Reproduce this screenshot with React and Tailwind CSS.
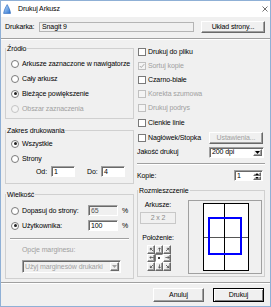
import React from 'react';

const SEP = 'h-[2px] border-t border-b border-t-[#a0a0a0] border-b-white';
const RAISED =
  'border border-t-white border-l-white border-b-[#696969] border-r-[#696969] shadow-[inset_-1px_-1px_0_#a0a0a0] bg-[#f0f0f0]';
const SUNKEN =
  'border border-t-[#a0a0a0] border-l-[#a0a0a0] border-b-white border-r-white shadow-[inset_1px_1px_0_#696969]';

function Btn({ children, className = '', disabled, def }) {
  const frame = def
    ? 'border border-black bg-[#f0f0f0] shadow-[inset_1px_1px_0_white,inset_-1px_-1px_0_#808080]'
    : RAISED;
  return (
    <div
      className={`flex shrink-0 items-center justify-center ${frame} ${disabled ? 'text-[#a0a0a0]' : 'text-black'} ${className}`}
    >
      {children}
    </div>
  );
}

function Field({ children, className = '', disabled }) {
  return (
    <div
      className={`flex shrink-0 items-center pl-[2px] ${SUNKEN} ${disabled ? 'bg-[#f0f0f0] text-[#555]' : 'bg-white'} ${className}`}
    >
      {children}
    </div>
  );
}

function Arrow({ fill }) {
  return (
    <svg viewBox="0 0 5 3" className="h-[3px] w-[5px]">
      <path d="M0 0 H5 L2.5 3 Z" fill={fill} />
    </svg>
  );
}

function Combo({ value, className = '', disabled }) {
  return (
    <div
      className={`flex shrink-0 ${SUNKEN} ${disabled ? 'bg-[#f0f0f0] text-[#a0a0a0]' : 'bg-white'} ${className}`}
    >
      <span className="flex flex-1 items-center pl-[2px]">{value}</span>
      <span className={`my-[1px] mr-[1px] flex w-[9px] items-center justify-center ${RAISED}`}>
        <Arrow fill={disabled ? '#a0a0a0' : '#000'} />
      </span>
    </div>
  );
}

function Spin({ className = '' }) {
  return (
    <div className={`flex shrink-0 bg-white ${SUNKEN} ${className}`}>
      <span className="flex flex-1 items-center pl-[2px]">1</span>
      <span className="my-[1px] mr-[1px] flex w-[8px] flex-col">
        <span className={`flex flex-1 items-center justify-center ${RAISED}`}>
          <svg viewBox="0 0 5 3" className="h-[2px] w-[4px]">
            <path d="M0 3 H5 L2.5 0 Z" fill="#000" />
          </svg>
        </span>
        <span className={`flex flex-1 items-center justify-center ${RAISED}`}>
          <svg viewBox="0 0 5 3" className="h-[2px] w-[4px]">
            <path d="M0 0 H5 L2.5 3 Z" fill="#000" />
          </svg>
        </span>
      </span>
    </div>
  );
}

function Radio({ label, checked, disabled, labelClass = '', children }) {
  return (
    <div className="flex h-[15px] items-center pl-[5px]">
      <span
        className={`flex h-[8px] w-[8px] shrink-0 items-center justify-center rounded-full border ${disabled ? 'border-[#c4c4c4] bg-[#f4f4f4]' : 'border-[#7a7a7a] bg-white'}`}
      >
        {checked && <span className="h-[3px] w-[3px] rounded-full bg-[#222]" />}
      </span>
      <span className={`ml-[3px] whitespace-nowrap ${disabled ? 'text-[#a0a0a0]' : ''} ${labelClass}`}>
        {label}
      </span>
      {children}
    </div>
  );
}

function Check({ label, checked, disabled, className = 'h-[14px]', children }) {
  return (
    <div className={`flex items-center pl-[1px] ${className}`}>
      <span
        className={`flex h-[8px] w-[8px] shrink-0 items-center justify-center border ${disabled ? 'border-[#c0c0c0] bg-[#f4f4f4]' : 'border-[#7a7a7a] bg-white'}`}
      >
        {checked && (
          <svg viewBox="0 0 8 8" className="h-[6px] w-[6px]">
            <path
              d="M1 4 L3 6 L7 1.5"
              fill="none"
              stroke={disabled ? '#a0a0a0' : '#222'}
              strokeWidth="1.2"
            />
          </svg>
        )}
      </span>
      <span className={`ml-[2px] whitespace-nowrap ${disabled ? 'text-[#a0a0a0]' : ''}`}>{label}</span>
      {children}
    </div>
  );
}

function Group({ title, className = '', children }) {
  return (
    <fieldset className={`border border-[#d0d0d0] ${className}`}>
      <legend className="px-[1px] leading-[9px]">{title}</legend>
      {children}
    </fieldset>
  );
}

const cells = [315, 0, 45, 270, null, 90, 225, 180, 135];

function PosGrid() {
  return (
    <div className="mt-[3px] ml-[2px] grid h-[26px] w-[24px] grid-cols-3 grid-rows-3">
      {cells.map((a, i) =>
        a === null ? (
          <span
            key={i}
            className="flex items-center justify-center border border-t-[#808080] border-l-[#808080] border-b-white border-r-white bg-white"
          >
            <span className="h-[2px] w-[2px] rounded-full bg-black" />
          </span>
        ) : (
          <span key={i} className={`flex items-center justify-center ${RAISED}`}>
            <svg viewBox="0 0 6 6" className="h-[5px] w-[5px]">
              <path
                d="M3 5.5 V1 M1.3 2.7 L3 1 L4.7 2.7"
                fill="none"
                stroke="#333"
                strokeWidth="0.8"
                transform={`rotate(${a} 3 3)`}
              />
            </svg>
          </span>
        )
      )}
    </div>
  );
}

function TitleIcon() {
  return (
    <svg viewBox="0 0 8 10" className="h-[10px] w-[8px] shrink-0">
      <defs>
        <linearGradient id="ti" x1="0" y1="0" x2="1" y2="1">
          <stop offset="0" stopColor="#bfe0ff" />
          <stop offset="1" stopColor="#2f74d0" />
        </linearGradient>
      </defs>
      <path d="M4.2 0.6 C5.5 3 7.2 6 7.5 9.4 L0.6 9.4 C1.2 6 2.6 3 4.2 0.6 Z" fill="url(#ti)" stroke="#1f5fb8" strokeWidth="0.6" />
    </svg>
  );
}

export default function App() {
  return (
    <div className="flex h-[307px] w-[271px] flex-col overflow-hidden border border-[#8fb0d6] bg-[#f0f0f0] font-['Liberation_Sans',Arial,sans-serif] text-[7px] leading-[8px] tracking-[-0.1px] text-black">
      {/* title bar */}
      <div className="flex h-[16px] shrink-0 items-center bg-white pl-[2px] pr-[2px]">
        <TitleIcon />
        <span className="ml-[7px]">Drukuj Arkusz</span>
        <svg viewBox="0 0 6 6" className="ml-auto h-[6px] w-[6px]">
          <path d="M0.5 0.5 L5.5 5.5 M5.5 0.5 L0.5 5.5" stroke="#333" strokeWidth="0.7" />
        </svg>
      </div>

      {/* printer row */}
      <div className="mt-[4px] flex h-[12px] shrink-0 items-center pl-[4px]">
        <span className="w-[34px]">Drukarka:</span>
        <div className="flex h-[10px] w-[155px] items-center border border-[#b4b4b4] bg-[#f0f0f0] pl-[2px]">
          Snagit 9
        </div>
        <Btn className="ml-[7px] h-[12px] w-[64px]">Układ strony...</Btn>
      </div>
      <div className={`mt-[5px] shrink-0 ${SEP}`} />

      {/* main */}
      <div className="flex h-[242px] shrink-0 pl-[4px]">
        {/* left column */}
        <div className="flex w-[129px] flex-col pt-[4px]">
          <Group title="Źródło" className="pb-[2px]">
            <div className="mt-[3px]">
              <Radio label="Arkusze zaznaczone w nawigatorze" />
              <Radio label="Cały arkusz" />
              <Radio label="Bieżące powiększenie" checked />
              <Radio label="Obszar zaznaczenia" disabled />
            </div>
          </Group>

          <Group title="Zakres drukowania" className="mt-[7px] pb-[6px]">
            <div className="mt-[1px]">
              <Radio label="Wszystkie" checked />
              <Radio label="Strony" />
              <div className="flex h-[11px] items-center pl-[30px]">
                <span className="w-[15px]">Od:</span>
                <Field className="h-[11px] w-[24px]">1</Field>
                <span className="ml-[12px] w-[14px]">Do:</span>
                <Field className="h-[11px] w-[24px]">4</Field>
              </div>
            </div>
          </Group>

          <Group title="Wielkość" className="mt-[6px] pb-[5px]">
            <div className="mt-[4px]">
              <Radio label="Dopasuj do strony:" labelClass="w-[66px]">
                <Field disabled className="h-[11px] w-[30px]">
                  65
                </Field>
                <span className="ml-[4px]">%</span>
              </Radio>
              <Radio label="Użytkownika:" checked labelClass="w-[66px]">
                <Field className="h-[11px] w-[30px]">100</Field>
                <span className="ml-[4px]">%</span>
              </Radio>
            </div>
            <div className={`mx-[4px] mt-[5px] ${SEP}`} />
            <div className="mt-[6px] h-[8px] pl-[16px] text-[#a0a0a0]">Opcje marginesu:</div>
            <Combo disabled className="ml-[16px] mt-[6px] h-[13px] w-[99px]" value="Użyj marginesów drukarki" />
          </Group>
        </div>

        {/* right column */}
        <div className="ml-[3px] flex w-[128px] flex-col pt-[5px]">
          <Check label="Drukuj do pliku" />
          <Check label="Sortuj kopie" checked disabled />
          <Check label="Czarno-białe" />
          <Check label="Korekta szumowa" disabled />
          <Check label="Drukuj podrys" disabled />
          <Check label="Cienkie linie" className="h-[15px]" />
          <Check label="Nagłówek/Stopka" className="h-[15px]">
            <Btn disabled className="ml-auto mr-[2px] h-[12px] w-[54px]">
              Ustawienia...
            </Btn>
          </Check>
          <div className="flex h-[14px] items-center">
            <span>Jakość drukuj</span>
            <Combo className="ml-auto mr-[1px] h-[11px] w-[55px]" value="200 dpi" />
          </div>
          <div className={`mt-[4px] ${SEP}`} />
          <div className="mt-[5px] flex h-[11px] items-center">
            <span>Kopie:</span>
            <Spin className="ml-auto mr-[2px] h-[11px] w-[29px]" />
          </div>

          <Group title="Rozmieszczenie" className="mt-[5px] pb-[2px]">
            <div className="flex">
              <div className="ml-[2px] flex w-[36px] flex-col items-center">
                <span className="mt-[6px] h-[8px]">Arkusze:</span>
                <div className="mt-[3px] flex h-[12px] w-[36px] items-center justify-center border border-[#c8c8c8] text-[#8a8a8a]">
                  2 x 2
                </div>
                <span className="mt-[10px] h-[8px]">Położenie:</span>
                <PosGrid />
              </div>
              <div className="ml-[12px] mt-[5px] h-[74px] w-[74px] border border-[#a0a0a0] bg-[#f0f0f0]">
                <svg viewBox="0 0 72 72" className="h-[72px] w-[72px]">
                  <rect x="14.5" y="2.5" width="45" height="67" fill="#fff" stroke="#000" strokeWidth="1" />
                  <line x1="15" y1="36.5" x2="59" y2="36.5" stroke="#555" strokeWidth="1" />
                  <line x1="35.5" y1="3" x2="35.5" y2="69" stroke="#000" strokeWidth="1" />
                  <rect x="20" y="17" width="32" height="36" fill="none" stroke="#0000ff" strokeWidth="2" />
                </svg>
              </div>
            </div>
          </Group>
        </div>
      </div>

      <div className={`shrink-0 ${SEP}`} />
      <div className="mt-[4px] flex h-[14px] shrink-0 justify-end gap-[9px] pr-[6px]">
        <Btn className="h-[14px] w-[51px]">Anuluj</Btn>
        <Btn def className="h-[14px] w-[51px]">
          Drukuj
        </Btn>
      </div>
    </div>
  );
}
